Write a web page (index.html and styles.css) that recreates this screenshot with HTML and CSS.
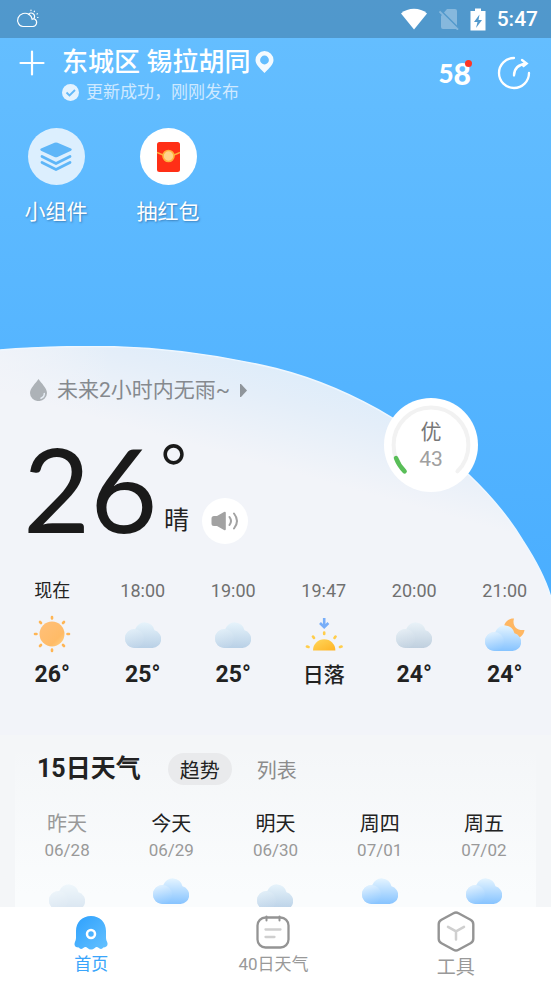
FILE: index.html
```html
<!DOCTYPE html>
<html lang="zh-CN">
<head>
<meta charset="utf-8">
<meta name="viewport" content="width=device-width, initial-scale=1">
<title>东城区天气</title>
<link rel="stylesheet" href="styles.css">
</head>
<body>
<svg class="defs" aria-hidden="true">
  <defs>
    <linearGradient id="blueA" x1="0" y1="0" x2="0" y2="1"><stop offset="0" stop-color="#e4f4ff"/><stop offset="1" stop-color="#86c3ff"/></linearGradient>
    <linearGradient id="blueB" x1="0.2" y1="0" x2="0.5" y2="1"><stop offset="0" stop-color="#ecf7ff"/><stop offset="1" stop-color="#8fc8ff"/></linearGradient>
    <linearGradient id="grayA" x1="0" y1="0" x2="0" y2="1"><stop offset="0" stop-color="#e6f3fb"/><stop offset="1" stop-color="#b9d0e6"/></linearGradient>
    <linearGradient id="grayB" x1="0.2" y1="0" x2="0.5" y2="1"><stop offset="0" stop-color="#e6f2fa"/><stop offset="1" stop-color="#c0d5e9"/></linearGradient>
    <linearGradient id="sunFill" x1="0" y1="0" x2="1" y2="1"><stop offset="0" stop-color="#ffc07a"/><stop offset="0.7" stop-color="#ffbb67"/><stop offset="1" stop-color="#ffd488"/></linearGradient>
    <linearGradient id="setFill" x1="0" y1="0" x2="1" y2="1"><stop offset="0" stop-color="#ffd75c"/><stop offset="1" stop-color="#ffb325"/></linearGradient>
    <symbol id="cloud-gray" viewBox="0 0 36 27">
      <path d="M9.500 27A9.500 9.500 0 0 1 9.500 8h.8A10 10 0 0 1 29.500 9.300 9 9 0 0 1 27.500 27z" fill="url(#grayA)"/>
      <circle cx="9.500" cy="17.500" r="9.500" fill="url(#grayB)" opacity=".75"/>
    </symbol>
    <symbol id="cloud-blue" viewBox="0 0 36 27">
      <path d="M9.500 27A9.500 9.500 0 0 1 9.500 8h.8A10 10 0 0 1 29.500 9.300 9 9 0 0 1 27.500 27z" fill="url(#blueA)"/>
      <circle cx="9.500" cy="17.500" r="9.500" fill="url(#blueB)" opacity=".75"/>
    </symbol>
  </defs>
</svg>
<div class="app">
  <div class="status">
    <svg width="24" height="20" viewBox="0 0 24 20" fill="none" stroke="#fff" stroke-width="1.200" stroke-linecap="round">
      <path d="M7 17.500h10a4 4 0 0 0 2-7.200c-1-.5-2-.4-2.800 0C15.500 5.500 11 3.500 7 4.500 2 6 .5 11 2.500 14.500 3.500 16.500 5 17.500 7 17.500z"/>
      <path d="M12.500 5.500a3.200 3.200 0 1 1 5.500 3.800M15 1v.6M18.500 2.200l-.3.500M21.500 4.800l-.5.200M22 8.500h-.4"/>
    </svg>
    <div class="status-right">
      <svg width="28" height="22" viewBox="0 0 28 22"><path d="M1 5.500C8 -.7 20 -.7 27 5.500L14 21.500z" fill="#fff"/></svg>
      <svg width="20" height="22" viewBox="0 0 20 22"><path d="M2 8L8 1h8a2 2 0 0 1 2 2v16a2 2 0 0 1-1 2H4a2 2 0 0 1-2-2z" fill="#86b8dd"/><path d="M0 1L20 21" stroke="#5299cc" stroke-width="2"/><path d="M.5 3.500L19 21.700" stroke="#86b8dd" stroke-width="1.800"/></svg>
      <svg width="16" height="23" viewBox="0 0 16 23"><path d="M5 .5h6V3h4.500v19.500H.5V3H5z" fill="#fff"/><path d="M9.500 6.500L4 14h3.500L6 20l6-8H8.500z" fill="#5299cc"/></svg>
      <span>5:47</span>
    </div>
  </div>

  <main>
    <header class="top">
      <button class="plain add" aria-label="添加城市"><svg width="26" height="26" viewBox="0 0 26 26" stroke="#fff" stroke-width="2.200" stroke-linecap="round"><path d="M13 1.500v23M1.500 13h23"/></svg></button>
      <div class="place">
        <h1>东城区 锡拉胡同
          <svg width="19" height="22" viewBox="0 0 19 22"><path fill-rule="evenodd" fill="#fff" opacity=".92" d="M9.500 0a9 9 0 0 1 9 9c0 4-3.500 7.500-9 13C4 16.500.5 13 .5 9a9 9 0 0 1 9-9zm0 4.600a4.400 4.400 0 1 0 0 8.800 4.400 4.400 0 0 0 0-8.800z"/></svg>
        </h1>
        <p><svg width="17" height="17" viewBox="0 0 17 17"><circle cx="8.500" cy="8.500" r="8.500" fill="#e4f3ff"/><path d="M4.500 8.500l3 3 5.500-5.500" fill="none" stroke="#62b8f8" stroke-width="1.800"/></svg><span>更新成功，刚刚发布</span></p>
      </div>
      <div class="actions">
        <button class="plain logo58"><span>5</span><span class="eight">8</span><i></i></button>
        <button class="plain" aria-label="分享"><svg width="34" height="34" viewBox="0 0 34 34" fill="none" stroke="#fff" stroke-width="2.300" stroke-linecap="round"><path d="M17 2A15 15 0 1 0 32 17M17 19.500C17 13 21 8.500 29.500 7.500M25 4l4.700 3.500L26.500 10"/></svg></button>
      </div>
    </header>

    <nav class="shortcuts">
      <a href="#widgets"><span class="disc pale"><svg width="32" height="30" viewBox="0 0 32 30" fill="#5eb6f8"><path d="M14.500.8q1.500-.7 3 0L31 6.500q1.500 1 0 2.200L17.500 15q-1.500.7-3 0L1 8.700q-1.500-1.200 0-2.200z"/><path fill="none" stroke="#5eb6f8" stroke-width="2.800" stroke-linecap="round" stroke-linejoin="round" d="M2 14.500l14 7 14-7M2 20.500l14 7 14-7"/></svg></span>小组件</a>
      <a href="#gift"><span class="disc"><svg width="23" height="30" viewBox="0 0 23 30"><rect width="23" height="30" rx="2.500" fill="#ff2f16"/><path d="M0 10.500l11.500 5 11.500-5" fill="none" stroke="#ffb13c" stroke-width="1.500"/><circle cx="11.500" cy="14" r="5.500" fill="#ffd38a" stroke="#ffb13c" stroke-width="1.600"/></svg></span>抽红包</a>
    </nav>

    <section class="panel">
      <svg class="curve" viewBox="0 0 551 255" preserveAspectRatio="none" aria-hidden="true">
        <defs><linearGradient id="mist" gradientUnits="userSpaceOnUse" x1="255" y1="0" x2="225" y2="108"><stop offset="0" stop-color="#dcecfa"/><stop offset="0.400" stop-color="#e4eef9"/><stop offset="1" stop-color="#f2f4f9"/></linearGradient>
        <linearGradient id="side" x1="0" x2="1"><stop offset="0" stop-color="#f2f4f9" stop-opacity=".7"/><stop offset=".4" stop-color="#f2f4f9" stop-opacity="0"/></linearGradient></defs>
        <path fill="url(#mist)" d="M0 4C30 1.500 55 .5 95 .5 155 .5 215 8 276 22.600 317 33 356 50 393 72.300 420 88.500 446 107 469 129 489 148 508 170 523 195 536 215 546 234 551 252V255H0z"/>
        <path fill="url(#side)" d="M0 4C30 1.500 55 .5 95 .5 155 .5 215 8 276 22.600V255H0z"/>
        <path fill="none" stroke="#eef7ff" stroke-width="1.500" d="M0 4C30 1.500 55 .5 95 .5 155 .5 215 8 276 22.600 317 33 356 50 393 72.300 420 88.500 446 107 469 129 489 148 508 170 523 195 536 215 546 234 551 252"/>
      </svg>

      <a class="rain" href="#rain">
        <svg width="17" height="22" viewBox="0 0 17 22"><path fill="#adb2b7" d="M8.500 0C11 4 17 9 17 14a8 8 0 0 1-8.500 8A8 8 0 0 1 0 14C0 9 6 4 8.500 0z"/><path d="M14.300 14.500c0 2-1.300 4-3.300 4.700" fill="none" stroke="#e6edf5" stroke-width="1.500" stroke-linecap="round"/></svg>
        未来2小时内无雨~
        <svg width="7" height="13" viewBox="0 0 7 13"><path d="M0 0h1l6 6.500L1 13H0z" fill="#8f959b"/></svg>
      </a>

      <div class="aqi">
        <svg viewBox="0 0 94 94" fill="none" stroke-linecap="round" aria-hidden="true"><path d="M20.600 73.400a37.400 37.400 0 1 1 52.800 0" stroke="#f2f2f2" stroke-width="4"/><path d="M20.600 73.400A37.400 37.400 0 0 1 12 60" stroke="#59be58" stroke-width="4.500"/></svg>
        <strong>优</strong><span>43</span>
      </div>

      <div class="now">
        <span class="temp">26</span>
        <div class="side">
          <span class="deg">°</span>
          <div class="cond"><span>晴</span>
            <button class="plain speak" aria-label="语音播报"><svg width="28" height="20" viewBox="0 0 28 20"><path fill="#a2a2a2" d="M3 5h3l7-4q1.800-.8 1.800 1v16q0 1.800-1.800 1L6 15H3q-2.500 0-2.500-2.500v-5Q.5 5 3 5z"/><path fill="none" stroke="#a2a2a2" stroke-width="2" stroke-linecap="round" d="M18.500 6q3 4 0 8M23 2.500q6 7.500 0 15"/></svg></button>
          </div>
        </div>
      </div>

      <ol class="hours">
        <li class="current"><span>现在</span>
          <svg width="38" height="38" viewBox="0 0 38 38"><circle cx="19" cy="19" r="12.500" fill="url(#sunFill)"/><g stroke="#ffb554" stroke-width="2.600" stroke-linecap="round"><path d="M19 2v1.500M19 34.500V36M2 19h1.500M34.500 19H36M7 7l1 1M30 30l1 1M31 7l-1 1M8 30l-1 1"/></g></svg>
          <b>26°</b></li>
        <li><span>18:00</span><svg width="36" height="38" viewBox="0 0 36 38"><use href="#cloud-gray" y="6" width="36" height="27"/></svg><b>25°</b></li>
        <li><span>19:00</span><svg width="36" height="38" viewBox="0 0 36 38"><use href="#cloud-gray" y="6" width="36" height="27"/></svg><b>25°</b></li>
        <li><span>19:47</span>
          <svg width="38" height="38" viewBox="0 0 38 38"><path d="M8 35.500a11.200 11.200 0 0 1 22.400 0z" fill="url(#setFill)"/><path d="M19.200 3v9M15 8l4.200 4.200L23.400 8" fill="none" stroke="#78aef9" stroke-width="2.600"/><g stroke="#ffcd4b" stroke-width="2.600" stroke-linecap="round"><path d="M19.200 17.500V19M8 21.500l1 1.500M30.500 21.500l-1 1.500M2 31.500l1.500.5M36.500 31.500L35 32"/></g></svg>
          <b class="word">日落</b></li>
        <li><span>20:00</span><svg class="dusk" width="36" height="38" viewBox="0 0 36 38"><use href="#cloud-gray" y="6" width="36" height="27"/></svg><b>24°</b></li>
        <li><span>21:00</span><svg width="40" height="38" viewBox="0 0 40 38"><path d="M29 3.500c-2 6.500 2 12.500 10.500 11.500C38.500 21 34 24.500 28 23 20 20 18 15 19.500 9.500 21 6 25 3 29 3.500z" fill="#ffb763"/><use href="#cloud-blue" y="9" width="36" height="27"/></svg><b>24°</b></li>
      </ol>
    </section>

    <section class="forecast">
      <div class="card">
        <div class="heading"><h2>15日天气</h2><button class="plain tab on">趋势</button><button class="plain tab">列表</button></div>
        <ol class="days">
          <li class="past"><b>昨天</b><span>06/28</span><svg class="low" width="36" height="27"><use href="#cloud-gray" width="36" height="27"/></svg></li>
          <li><b>今天</b><span>06/29</span><svg width="36" height="27"><use href="#cloud-blue" width="36" height="27"/></svg></li>
          <li><b>明天</b><span>06/30</span><svg class="low" width="36" height="27"><use href="#cloud-gray" width="36" height="27"/></svg></li>
          <li><b>周四</b><span>07/01</span><svg width="36" height="27"><use href="#cloud-blue" width="36" height="27"/></svg></li>
          <li><b>周五</b><span>07/02</span><svg width="36" height="27"><use href="#cloud-blue" width="36" height="27"/></svg></li>
        </ol>
      </div>
    </section>
  </main>

  <nav class="tabs">
    <a class="active" href="#home"><svg width="34" height="36" viewBox="0 0 34 36"><defs><linearGradient id="homeFill" x1="0" y1="0" x2="1" y2="1"><stop offset="0" stop-color="#2da0fd"/><stop offset="1" stop-color="#65c1ff"/></linearGradient></defs><path fill="url(#homeFill)" d="M17 1C26 1 32 7.500 32 16v7q0 2 1.300 4.500c1 3-1 5-4 5q-1.700 2.500-4.500.5-2.300-2-4 0Q17 36 13.500 33q-2-2-4.200 0-2.800 2-4.500-.5c-3.500 0-5-2-4-5Q2 25 2 23v-7C2 7.500 8 1 17 1z"/><circle cx="17" cy="19" r="4" fill="none" stroke="#fff" stroke-width="2.500"/></svg>首页</a>
    <a href="#forty"><svg width="34" height="36" viewBox="0 0 34 36" fill="none" stroke-linecap="round"><rect x="1.500" y="2.500" width="31" height="30" rx="8" stroke="#949494" stroke-width="2.300"/><path d="M10.500 1.500v4M23.500 1.500v4" stroke="#949494" stroke-width="2"/><path d="M9.500 14.500h15M9.500 22h9" stroke="#cfcfcf" stroke-width="2.300"/></svg>40日天气</a>
    <a class="tools" href="#tools"><svg width="38" height="41" viewBox="0 0 38 41" fill="none" stroke-linecap="round"><path d="M16.500 2.200q2.500-1.400 5 0l12 6.600q2.800 1.600 2.800 4.500v14.400q0 2.900-2.800 4.500l-12 6.600q-2.500 1.400-5 0l-12-6.600Q1.700 30.600 1.700 27.700V13.300q0-2.900 2.800-4.500z" stroke="#949494" stroke-width="2.400"/><path d="M19 28.500v-8.200l-8-4.500M19 20.300l8-4.500" stroke="#cfcfcf" stroke-width="2.500"/></svg>工具</a>
  </nav>
</div>
</body>
</html>
```
FILE: styles.css
```css
* { box-sizing: border-box; }

body {
  margin: 0;
  font-family: Roboto, "Noto Sans CJK SC", sans-serif;
  color: #222;
}

h1, h2, p, ol { margin: 0; padding: 0; }
ol { list-style: none; }
a { color: inherit; text-decoration: none; }
svg { display: block; flex: none; }
.defs { position: absolute; width: 0; height: 0; }

.plain {
  display: flex;
  align-items: center;
  justify-content: center;
  border: 0;
  padding: 0;
  background: none;
  color: inherit;
  font: inherit;
}

.app {
  height: 100vh;
  display: flex;
  flex-direction: column;
  background: linear-gradient(#66bfff, #4aaeff 600px);
}

.status {
  flex: none;
  height: 38px;
  padding: 0 13px 0 16px;
  display: flex;
  align-items: center;
  justify-content: space-between;
  background: rgba(0, 0, 0, 0.2);
  color: #fff;
}
.status-right {
  display: flex;
  align-items: center;
  gap: 11px;
  font-size: 21px;
  font-weight: 500;
}

main { flex: 1; min-height: 0; overflow: hidden; }

.top {
  display: flex;
  align-items: flex-start;
  padding: 8px 20px 0 19px;
  color: #fff;
}
.add { margin-top: 4px; }
.place { margin-left: 17px; flex: 1; }
.place h1 {
  display: flex;
  align-items: center;
  gap: 5px;
  font-size: 26px;
  line-height: 32px;
  font-weight: 500;
}
.place p {
  display: flex;
  align-items: center;
  gap: 7px;
  margin-top: 2px;
  font-size: 17px;
  line-height: 24px;
  color: #cfe9ff;
}
.actions { display: flex; align-items: center; gap: 26px; margin-top: 10px; }
.logo58 {
  position: relative;
  height: 34px;
  font-family: Lato, sans-serif;
  font-size: 26px;
  font-weight: 900;
  line-height: 34px;
}
.logo58 .eight { font-size: 30px; }
.logo58 i {
  position: absolute;
  top: 4px;
  right: -1px;
  width: 7px;
  height: 7px;
  border-radius: 50%;
  background: #ff3524;
}

.shortcuts { display: flex; margin-top: 24px; }
.shortcuts a {
  width: 112px;
  display: flex;
  flex-direction: column;
  align-items: center;
  gap: 11px;
  color: #fff;
  font-size: 21px;
  line-height: 32px;
  text-shadow: 1px 1px 2px rgba(40, 90, 140, 0.6);
}
.disc {
  width: 57px;
  height: 57px;
  border-radius: 50%;
  display: grid;
  place-items: center;
  background: #fff;
}
.disc.pale { background: #dceffe; }

.panel {
  position: relative;
  margin-top: 118px;
  padding-top: 28px;
  background: linear-gradient(transparent 254px, #f2f4f9 254px);
}
.curve { position: absolute; top: 0; left: 0; width: 100%; height: 255px; }

.rain {
  position: relative;
  display: flex;
  align-items: center;
  gap: 10px;
  padding-left: 30px;
  font-size: 21px;
  line-height: 32px;
  color: #85898e;
}

.aqi {
  position: absolute;
  top: 52px;
  right: 73px;
  width: 94px;
  height: 94px;
  padding-top: 21px;
  border-radius: 50%;
  background: #fff;
  display: flex;
  flex-direction: column;
  align-items: center;
  font-size: 21px;
  line-height: 27px;
  color: #a0a0a0;
}
.aqi svg { position: absolute; inset: 0; }
.aqi strong { font-weight: 400; color: #777; }

.now {
  position: relative;
  display: flex;
  height: 145px;
  padding-left: 23px;
}
.temp {
  width: 136px;
  font-family: Lato, sans-serif;
  font-size: 116px;
  font-weight: 400;
  line-height: 166px;
  color: #1a1a1a;
}
.side {
  display: flex;
  flex-direction: column;
  justify-content: space-between;
  padding: 32px 0 7px;
}
.deg {
  font-family: Inter, sans-serif;
  font-size: 64px;
  font-weight: 300;
  line-height: 60px;
  color: #1a1a1a;
}
.cond { display: flex; align-items: center; gap: 13px; padding-left: 5px; font-size: 25px; line-height: 30px; }
.speak { width: 46px; height: 46px; border-radius: 50%; background: #fff; }

.hours {
  position: relative;
  display: grid;
  grid-template-columns: repeat(6, 1fr);
  padding: 28px 1px 46px 7px;
}
.hours li { display: flex; flex-direction: column; align-items: center; }
.hours span { font-size: 18px; line-height: 24px; color: #707070; }
.hours .current span { color: #222; }
.hours svg { margin: 12px 0 8px; }
.hours b { font-size: 23px; line-height: 28px; }
.hours .word { font-size: 21px; font-weight: 500; }
.dusk { filter: saturate(0.7); }

.forecast {
  height: 220px;
  padding: 0 15px;
  background: #f4f6f8;
}
.card { height: 100%; background: linear-gradient(rgba(252, 253, 254, 0) 10px, #fafcfd 160px); }
.heading { display: flex; align-items: center; padding: 18px 22px 0; }
.heading h2 { font-size: 25px; line-height: 32px; margin-right: 27px; }
.tab {
  height: 32px;
  padding: 0 12px;
  border-radius: 16px;
  font-size: 20px;
  color: #8c8c8c;
}
.tab.on { background: #e9eaec; color: #222; margin-right: 13px; }

.days { display: grid; grid-template-columns: repeat(5, 1fr); margin-top: 25px; }
.days li { display: flex; flex-direction: column; align-items: center; }
.days b { font-size: 20px; line-height: 28px; font-weight: 400; }
.days span { font-size: 17px; line-height: 24px; color: #999; }
.days svg { margin-top: 15px; }
.days .low { margin-top: 21px; }
.days .past b { color: #999; }
.days .past svg { opacity: 0.5; }

.tabs {
  flex: none;
  height: 74px;
  padding-right: 4px;
  display: grid;
  grid-template-columns: repeat(3, 1fr);
  background: #fff;
  color: #999;
  font-size: 17px;
  line-height: 24px;
}
.tabs a {
  display: flex;
  flex-direction: column;
  align-items: center;
  padding-top: 8px;
}
.tabs a.active { color: #3aa5fb; }
.tabs svg { margin-bottom: 1px; }
.tabs a.tools { padding-top: 4px; font-size: 19px; }
.tabs a.tools svg { margin-bottom: 4px; }
```
